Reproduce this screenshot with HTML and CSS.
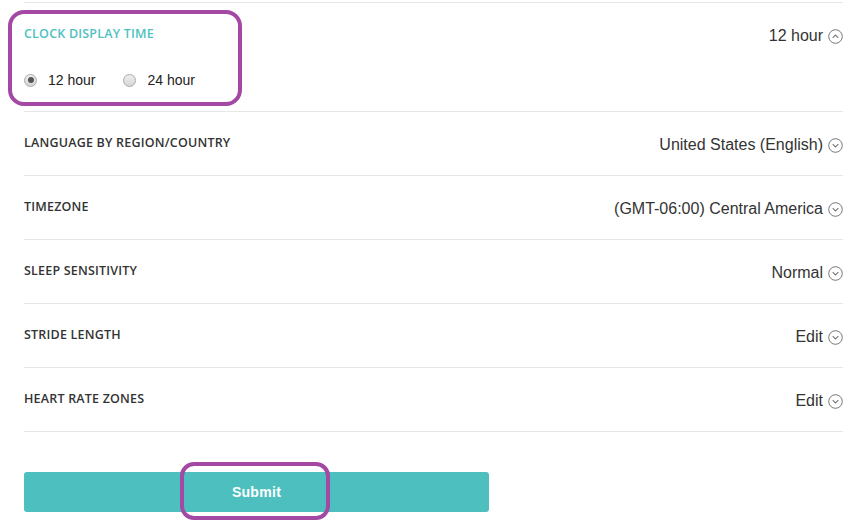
FILE: index.html
```html
<html>
<head>
<title>Device Settings</title>
<link rel="stylesheet" href="styles.css">
</head>
<body>
<div id="settings">

  <div class="row row-open">
    <div class="left">
      <div class="label label-active">CLOCK DISPLAY TIME</div>
      <div class="choices">
        <label class="choice"><span class="radio checked"></span>12 hour</label>
        <label class="choice"><span class="radio"></span>24 hour</label>
      </div>
    </div>
    <div class="value">12 hour
      <svg class="chev" width="15" height="15" viewBox="0 0 15 15"><circle cx="7.5" cy="7.5" r="6.8" fill="none" stroke="#777" stroke-width="1"/><path d="M4.7 8.8 L7.5 6 L10.3 8.8" fill="none" stroke="#777" stroke-width="1.1"/></svg>
    </div>
  </div>

  <div class="row">
    <div class="label">LANGUAGE BY REGION/COUNTRY</div>
    <div class="value">United States (English)
      <svg class="chev" width="15" height="15" viewBox="0 0 15 15"><circle cx="7.5" cy="7.5" r="6.8" fill="none" stroke="#777" stroke-width="1"/><path d="M4.7 6.2 L7.5 9 L10.3 6.2" fill="none" stroke="#777" stroke-width="1.1"/></svg>
    </div>
  </div>

  <div class="row">
    <div class="label">TIMEZONE</div>
    <div class="value">(GMT-06:00) Central America
      <svg class="chev" width="15" height="15" viewBox="0 0 15 15"><circle cx="7.5" cy="7.5" r="6.8" fill="none" stroke="#777" stroke-width="1"/><path d="M4.7 6.2 L7.5 9 L10.3 6.2" fill="none" stroke="#777" stroke-width="1.1"/></svg>
    </div>
  </div>

  <div class="row">
    <div class="label">SLEEP SENSITIVITY</div>
    <div class="value">Normal
      <svg class="chev" width="15" height="15" viewBox="0 0 15 15"><circle cx="7.5" cy="7.5" r="6.8" fill="none" stroke="#777" stroke-width="1"/><path d="M4.7 6.2 L7.5 9 L10.3 6.2" fill="none" stroke="#777" stroke-width="1.1"/></svg>
    </div>
  </div>

  <div class="row">
    <div class="label">STRIDE LENGTH</div>
    <div class="value">Edit
      <svg class="chev" width="15" height="15" viewBox="0 0 15 15"><circle cx="7.5" cy="7.5" r="6.8" fill="none" stroke="#777" stroke-width="1"/><path d="M4.7 6.2 L7.5 9 L10.3 6.2" fill="none" stroke="#777" stroke-width="1.1"/></svg>
    </div>
  </div>

  <div class="row">
    <div class="label">HEART RATE ZONES</div>
    <div class="value">Edit
      <svg class="chev" width="15" height="15" viewBox="0 0 15 15"><circle cx="7.5" cy="7.5" r="6.8" fill="none" stroke="#777" stroke-width="1"/><path d="M4.7 6.2 L7.5 9 L10.3 6.2" fill="none" stroke="#777" stroke-width="1.1"/></svg>
    </div>
  </div>

  <button class="submit">Submit</button>

  <!-- annotation marks -->
  <div class="mark mark-clock"></div>
  <div class="mark mark-submit"></div>
</div>
</body>
</html>
```

FILE: styles.css
```css
body {
  margin: 0;
  font-family: "Liberation Sans", Arial, sans-serif;
  background-color: #fff;
  color: #333;
}

#settings {
  position: relative;
  margin: 0 12px 0 24px;
  padding-top: 2px;
}

.row {
  display: flex;
  justify-content: space-between;
  align-items: flex-start;
  height: 63px;
  border-bottom: 1px solid #e6e6e6;
}

.row-open {
  height: 108px;
  border-top: 1px solid #e6e6e6;
}

.label {
  padding-top: 23px;
  font-family: "Open Sans", "Liberation Sans", sans-serif;
  font-size: 12.5px;
  font-weight: 600;
  letter-spacing: 0.2px;
  line-height: 16px;
  color: #333;
}

.label-active {
  color: #4fc1c1;
}

.choices {
  display: flex;
  margin-top: 30px;
}

.choice {
  display: flex;
  align-items: center;
  font-size: 14px;
  color: #222;
  margin-right: 28px;
}

.radio {
  display: inline-block;
  box-sizing: border-box;
  width: 13px;
  height: 13px;
  margin-right: 11px;
  border-radius: 50%;
  border: 1px solid #aaa;
  background: linear-gradient(#eee, #d6d6d6);
  position: relative;
}

.radio.checked::after {
  content: "";
  position: absolute;
  left: 2.5px;
  top: 2.5px;
  width: 6px;
  height: 6px;
  border-radius: 50%;
  background-color: #555;
}

.value {
  display: flex;
  align-items: center;
  padding-top: 24px;
  font-size: 16px;
  color: #333;
}

.chev {
  margin-left: 5px;
}

.submit {
  display: block;
  margin-top: 40px;
  width: 465px;
  height: 40px;
  border: none;
  border-radius: 3px;
  background-color: #4dbfbf;
  color: #fff;
  font-family: "Liberation Sans", Arial, sans-serif;
  font-size: 14px;
  font-weight: bold;
  letter-spacing: 0.3px;
  cursor: pointer;
}

.mark {
  position: absolute;
  border: 4px solid #a349a4;
  border-radius: 16px;
}

.mark-clock {
  left: -16px;
  top: 10px;
  width: 226px;
  height: 88px;
}

.mark-submit {
  left: 156px;
  top: 462px;
  width: 142px;
  height: 50px;
  border-radius: 14px;
}
```
